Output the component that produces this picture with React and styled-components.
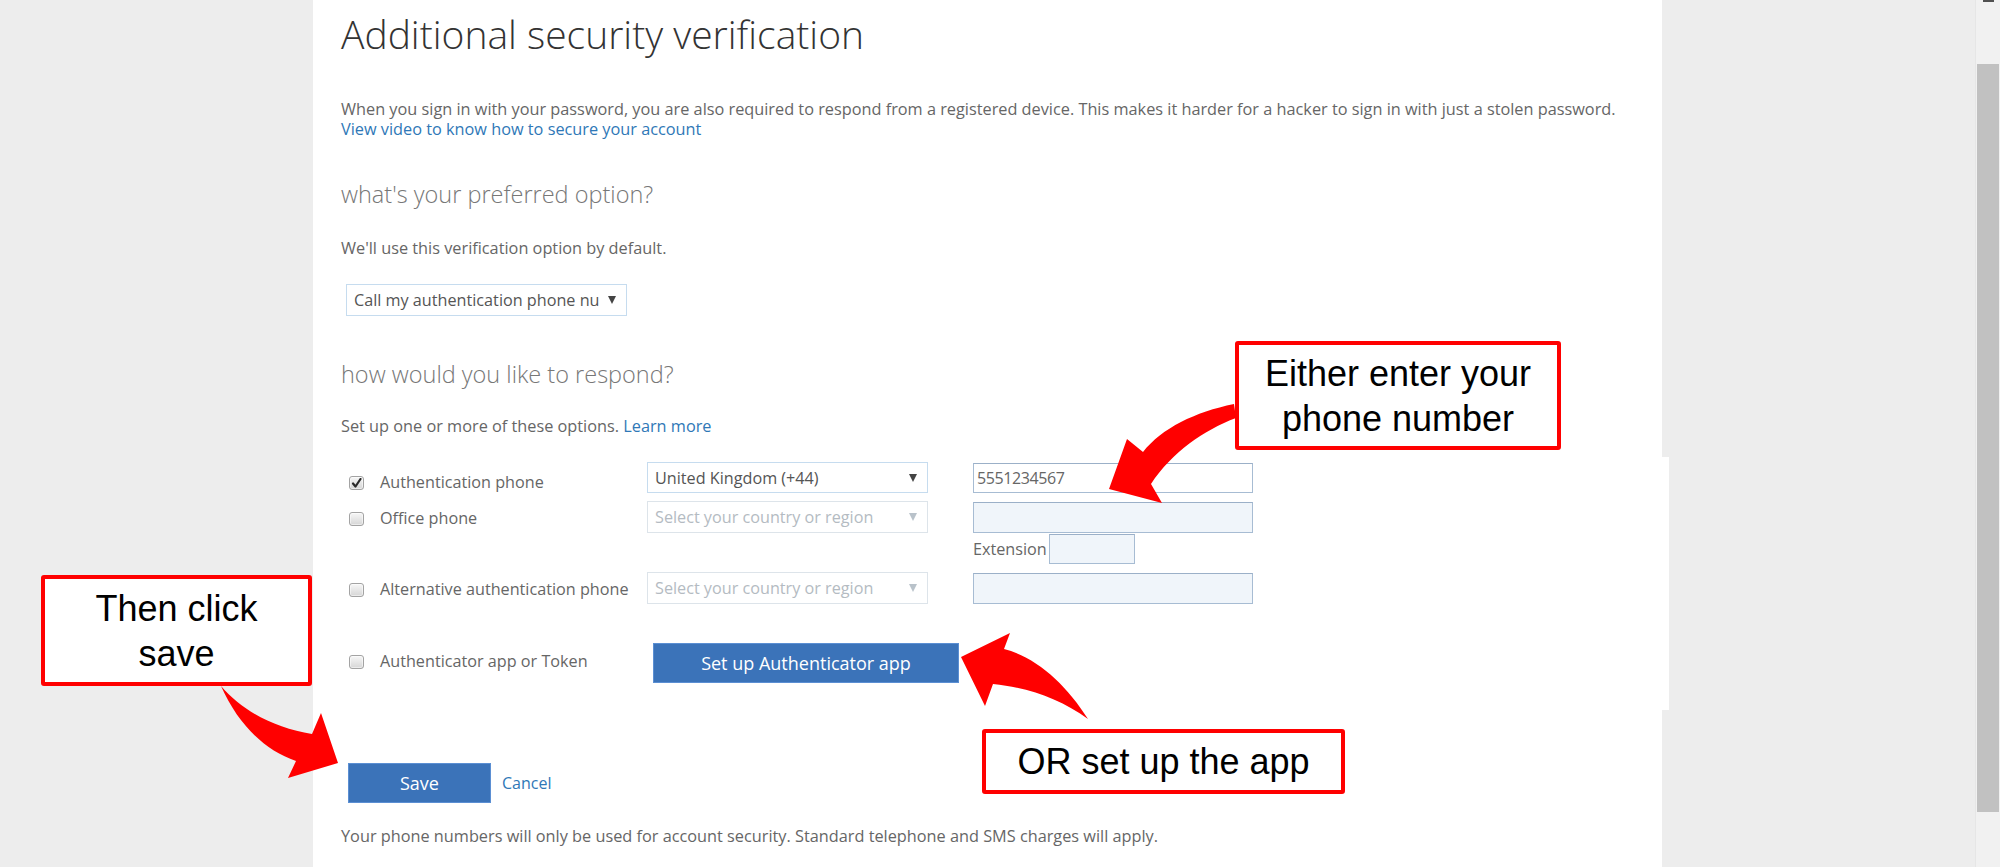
import React from 'react';
import styled, { createGlobalStyle } from 'styled-components';

const sans = `"Open Sans", "Segoe UI", "Noto Sans", sans-serif`;
const arial = `"Liberation Sans", Arial, sans-serif`;

const GlobalStyle = createGlobalStyle`
  html, body {
    margin: 0;
    padding: 0;
    background: #ededed;
    overflow: hidden;
  }
  * {
    box-sizing: border-box;
  }
`;

const Page = styled.div`
  display: flex;
  width: 2000px;
  height: 867px;
  font-family: ${sans};
`;

const Stage = styled.div`
  position: relative;
  flex: 1;
  display: flex;
  justify-content: center;
`;

const Panel = styled.main`
  width: 1349px;
  height: 100%;
  background: #fff;
  padding: 11px 28px 0;
`;

const Title = styled.h1`
  margin: 0;
  font-size: 39px;
  font-weight: 300;
  line-height: 46px;
  color: #333;
`;

const Text = styled.p`
  margin: ${p => p.$mt || 0}px 0 0;
  font-size: 16.3px;
  line-height: 20px;
  color: #666;
`;

const Link = styled.a`
  color: #2f78b7;
  text-decoration: none;
  cursor: pointer;
`;

const SectionHeading = styled.h2`
  margin: ${p => p.$mt}px 0 0;
  font-size: 23.5px;
  font-weight: 300;
  line-height: 30px;
  color: #777;
`;

const SelectBox = styled.div`
  display: flex;
  align-items: center;
  justify-content: space-between;
  gap: 8px;
  width: ${p => p.$w || 281}px;
  height: ${p => p.$h || 32}px;
  margin: ${p => p.$mt || 0}px 0 0 ${p => p.$ml || 0}px;
  padding: 0 10px 0 7px;
  border: 1px solid ${p => (p.$disabled ? '#dde4ea' : '#c6dcef')};
  background: #fff;
  font-size: 16.2px;
  color: ${p => (p.$disabled ? '#b4bbc2' : '#555')};
  white-space: nowrap;
  overflow: hidden;

  span {
    overflow: hidden;
  }
  svg {
    flex: none;
  }
`;

const OptionsTable = styled.section`
  width: calc(100% + 35px);
  margin-top: 21px;
  padding: 5px 0 27px;
  background: #fff;
`;

const OptionRow = styled.div`
  display: grid;
  grid-template-columns: 306px 281px 330px;
  align-items: start;
  height: ${p => p.$h}px;
  margin-top: ${p => p.$mt || 0}px;
`;

const InputCol = styled.div`
  display: flex;
  align-items: center;
  padding-left: 45px;
  height: 100%;
`;

const CheckCell = styled.label`
  display: flex;
  align-items: flex-start;
  gap: 16px;
  padding-left: 8px;
  margin-top: ${p => p.$mt}px;
  font-size: 16.2px;
  line-height: 20px;
  color: #666;
  white-space: nowrap;
`;

const CheckBox = styled.span`
  flex: none;
  display: flex;
  align-items: center;
  justify-content: center;
  width: 15px;
  height: 14px;
  margin-top: 4px;
  border: 1px solid #a3a3a3;
  border-radius: 3px;
  background: linear-gradient(#f7f7f7, #d6d6d6);
  box-shadow: inset 0 0 0 1px rgba(255, 255, 255, 0.5);
`;

const TextBox = styled.div`
  flex: none;
  width: ${p => p.$w || 280}px;
  height: ${p => p.$h || 31}px;
  padding: 0 3px;
  display: flex;
  align-items: center;
  border: 1px solid #a7bcd3;
  border-top-color: #9bb0c8;
  background: ${p => (p.$disabled ? '#f0f5fa' : '#fff')};
  font-size: 16px;
  color: #666;
  letter-spacing: -0.4px;
`;

const ExtLabel = styled.span`
  font-size: 16.2px;
  color: #666;
  margin-right: 2px;
`;

const BlueButton = styled.button`
  flex: none;
  width: ${p => p.$w}px;
  height: 40px;
  margin-left: ${p => p.$ml || 0}px;
  border: 1px solid #5b8fd3;
  background: #3b73b9;
  color: #fff;
  font-family: ${sans};
  font-size: 18px;
  padding: 0;
  cursor: pointer;
`;

const Actions = styled.div`
  display: flex;
  align-items: center;
  gap: 11px;
  margin: 53px 0 0 7px;
`;

const Footnote = styled(Text)`
  margin-top: 23px;
`;

const Callout = styled.div`
  position: absolute;
  left: ${p => p.$x}px;
  top: ${p => p.$y}px;
  width: ${p => p.$w}px;
  height: ${p => p.$h}px;
  display: flex;
  align-items: center;
  justify-content: center;
  border: 4px solid #ff0000;
  border-radius: 3px;
  background: #fff;
  font-family: ${arial};
  font-size: 36px;
  line-height: 45px;
  color: #000;
  text-align: center;
`;

const ArrowLayer = styled.svg`
  position: absolute;
  top: 0;
  left: 0;
  pointer-events: none;
`;

const Scrollbar = styled.div`
  position: relative;
  flex: none;
  width: 25px;
  height: 100%;
  background: #f1f1f1;
  border-left: 1px solid #e6e6e6;
  padding: 64px 1px 55px 1px;
`;

const ScrollNub = styled.span`
  position: absolute;
  top: 0;
  left: 7px;
  width: 11px;
  height: 2px;
  background: #505050;
`;

const Thumb = styled.div`
  height: 100%;
  background: #c1c1c1;
`;

const Caret = ({ color }) => (
  <svg width="8" height="8" viewBox="0 0 8 8">
    <polygon points="0,0 8,0 4,8" fill={color} />
  </svg>
);

const Tick = () => (
  <svg width="11" height="11" viewBox="0 0 11 11">
    <path d="M2 5.5 L4.5 8.5 L9.5 1" fill="none" stroke="#2b2b2b" strokeWidth="2.2" strokeLinecap="round" strokeLinejoin="round" />
  </svg>
);

const rows = [
  { label: 'Authentication phone', checked: true, h: 31, mt: 0, check: 10, country: 'United Kingdom (+44)', phone: '5551234567' },
  { label: 'Office phone', h: 32, mt: 8, check: 7, country: null, ext: true },
  { label: 'Alternative authentication phone', h: 32, mt: 8, check: 7, country: null },
];

const App = () => (
  <>
    <GlobalStyle />
    <Page>
      <Stage>
        <Panel>
          <Title>Additional security verification</Title>
          <Text $mt={42}>
            When you sign in with your password, you are also required to respond from a registered device. This makes it harder for a hacker to sign in with just a stolen password.
            <br />
            <Link>View video to know how to secure your account</Link>
          </Text>

          <SectionHeading $mt={40}>what's your preferred option?</SectionHeading>
          <Text $mt={29}>We'll use this verification option by default.</Text>
          <SelectBox $mt={26} $ml={5}>
            <span>Call my authentication phone nu</span>
            <Caret color="#444" />
          </SelectBox>

          <SectionHeading $mt={43}>how would you like to respond?</SectionHeading>
          <Text $mt={27}>
            Set up one or more of these options. <Link>Learn more</Link>
          </Text>

          <OptionsTable>
            {rows.map(r => (
              <React.Fragment key={r.label}>
                <OptionRow $h={r.h} $mt={r.mt}>
                  <CheckCell $mt={r.check}>
                    <CheckBox>{r.checked && <Tick />}</CheckBox>
                    {r.label}
                  </CheckCell>
                  <SelectBox $h={r.h} $disabled={!r.country}>
                    <span>{r.country || 'Select your country or region'}</span>
                    <Caret color={r.country ? '#444' : '#b9c2ca'} />
                  </SelectBox>
                  <InputCol>
                    <TextBox $h={r.h - 1} $disabled={!r.phone}>{r.phone}</TextBox>
                  </InputCol>
                </OptionRow>
                {r.ext && (
                  <OptionRow $h={30} $mt={1}>
                    <span />
                    <span />
                    <InputCol>
                      <ExtLabel>Extension</ExtLabel>
                      <TextBox $w={86} $h={30} $disabled />
                    </InputCol>
                  </OptionRow>
                )}
              </React.Fragment>
            ))}
            <OptionRow $h={40} $mt={39}>
              <CheckCell $mt={8}>
                <CheckBox />
                Authenticator app or Token
              </CheckCell>
              <BlueButton $w={306} $ml={6}>Set up Authenticator app</BlueButton>
            </OptionRow>
          </OptionsTable>

          <Actions>
            <BlueButton $w={143}>Save</BlueButton>
            <Link>Cancel</Link>
          </Actions>

          <Footnote>
            Your phone numbers will only be used for account security. Standard telephone and SMS charges will apply.
          </Footnote>
        </Panel>

        <ArrowLayer width="1975" height="867" viewBox="0 0 1975 867">
          <path d="M1234 404 C1195 412 1162 428 1143 452 L1127 439 L1109 489 L1162 503 L1151 484 C1172 452 1204 430 1236 418 Z" fill="#ff0000" />
          <path d="M221 686 C243 712 276 728 312 734 L321 713 L338 763 L288 778 L296 761 C264 750 238 724 221 686 Z" fill="#ff0000" />
          <path d="M961 657 L1010 633 L1004 649 C1036 657 1066 684 1088 719 C1060 699 1030 688 993 684 L985 706 Z" fill="#ff0000" />
        </ArrowLayer>

        <Callout $x={1235} $y={341} $w={326} $h={109}>Either enter your<br />phone number</Callout>
        <Callout $x={41} $y={575} $w={271} $h={111}>Then click<br />save</Callout>
        <Callout $x={982} $y={729} $w={363} $h={65}>OR set up the app</Callout>
      </Stage>

      <Scrollbar>
        <ScrollNub />
        <Thumb />
      </Scrollbar>
    </Page>
  </>
);

export default App;
